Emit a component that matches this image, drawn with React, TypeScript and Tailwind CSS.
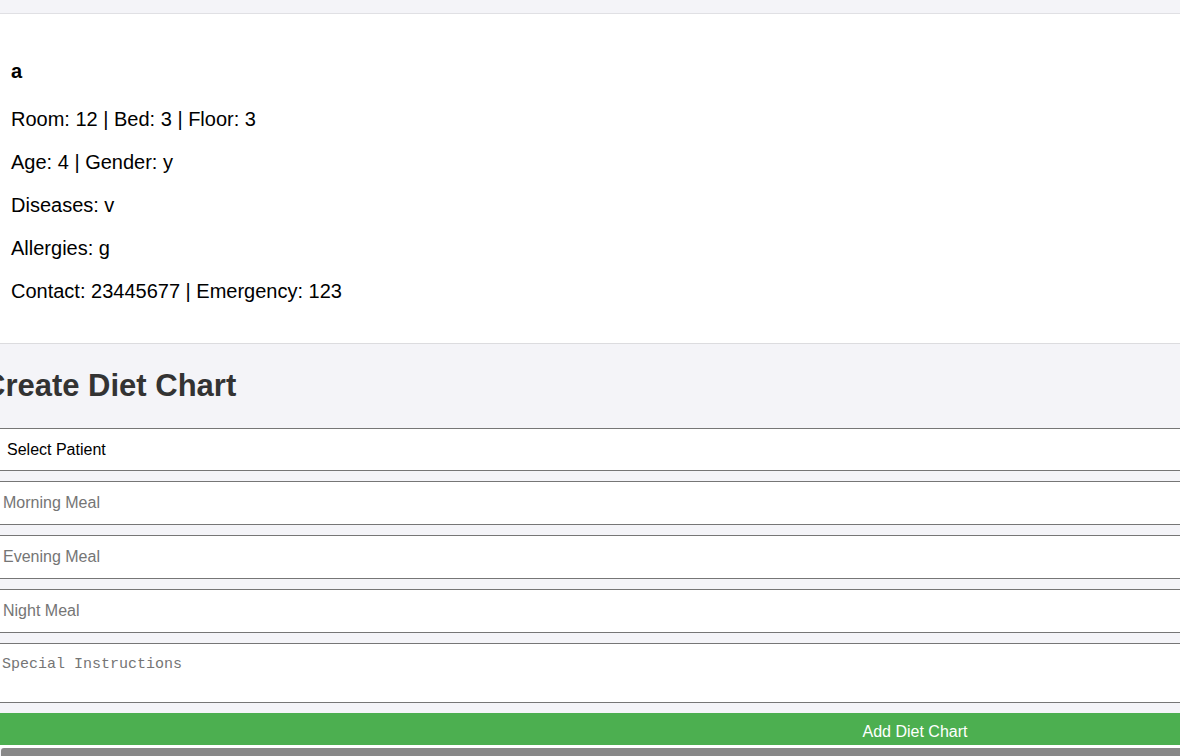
import React from "react";

export default function App() {
  const font = { fontFamily: '"Liberation Sans", Arial, sans-serif' };
  return (
    <div className="w-[1180px] h-[756px] overflow-hidden bg-[#f4f4f8]" style={font}>
      <div className="h-[14px] border-b border-[#e0e0e4] bg-[#f4f4f8]" />
      <div className="bg-white border-b border-[#dcdcdf] pt-[46px] pb-[40px] px-[11px] text-black">
        <h3 className="text-[20px] font-bold leading-[23px]">a</h3>
        <div className="mt-[25px] flex flex-col gap-[20px] text-[20px] leading-[23px]">
          <p>Room: 12 | Bed: 3 | Floor: 3</p>
          <p>Age: 4 | Gender: y</p>
          <p>Diseases: v</p>
          <p>Allergies: g</p>
          <p>Contact: 23445677 | Emergency: 123</p>
        </div>
      </div>
      <div className="pt-[24px]">
        <h2 className="-ml-[17px] text-[31px] font-bold leading-[36px] text-[#333] whitespace-nowrap">Create Diet Chart</h2>
        <div className="-ml-[10px] w-[1850px] mt-[24px] flex flex-col">
          <div className="h-[43px] border border-[#767676] bg-white flex items-center pl-[16px] text-[16px] text-black">
            Select Patient
          </div>
          <input
            className="mt-[10px] h-[44px] border border-[#767676] bg-white pl-[12px] text-[16px] placeholder:text-[#757575] outline-none"
            placeholder="Morning Meal"
            style={font}
          />
          <input
            className="mt-[10px] h-[44px] border border-[#767676] bg-white pl-[12px] text-[16px] placeholder:text-[#757575] outline-none"
            placeholder="Evening Meal"
            style={font}
          />
          <input
            className="mt-[10px] h-[44px] border border-[#767676] bg-white pl-[12px] text-[16px] placeholder:text-[#757575] outline-none"
            placeholder="Night Meal"
            style={font}
          />
          <textarea
            className="mt-[10px] h-[60px] border border-[#767676] bg-white pl-[11px] pt-[12px] text-[15px] leading-[18px] placeholder:text-[#757575] outline-none resize-none"
            placeholder="Special Instructions"
            style={{ fontFamily: '"Liberation Mono", "DejaVu Sans Mono", monospace' }}
          />
          <div className="mt-[10px] h-[32px] bg-[#4caf50] flex items-center justify-center pt-[5px] text-white text-[16px]">
            Add Diet Chart
          </div>
          <div className="h-[3px] bg-white" />
          <div className="ml-[11px] h-[20px] bg-[#888888] rounded-tl-[3px]" />
        </div>
      </div>
    </div>
  );
}
